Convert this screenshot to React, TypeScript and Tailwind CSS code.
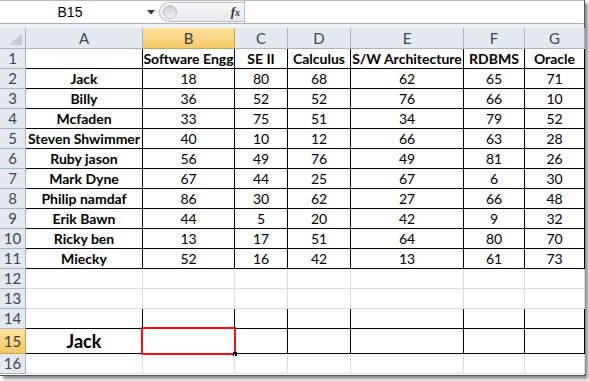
import React from "react";

/* ---------------- DATA ---------------- */
const COLS = ["A", "B", "C", "D", "E", "F", "G"];
const HEADERS = ["", "Software Engg", "SE II", "Calculus", "S/W Architecture", "RDBMS", "Oracle"];

const ROWS: (string | number)[][] = [
  ["Jack", 18, 80, 68, 62, 65, 71],
  ["Billy", 36, 52, 52, 76, 66, 10],
  ["Mcfaden", 33, 75, 51, 34, 79, 52],
  ["Steven Shwimmer", 40, 10, 12, 66, 63, 28],
  ["Ruby jason", 56, 49, 76, 49, 81, 26],
  ["Mark Dyne", 67, 44, 25, 67, 6, 30],
  ["Philip namdaf", 86, 30, 62, 27, 66, 48],
  ["Erik Bawn", 44, 5, 20, 42, 9, 32],
  ["Ricky ben", 13, 17, 51, 64, 80, 70],
  ["Miecky", 52, 16, 42, 13, 61, 73],
];

const GRID = "grid grid-cols-[26px_117px_92px_53px_63px_113px_61px_60px]";

/* ---------------- PIECES ---------------- */
const RowHeader = ({ n, active, tall }: { n: number; active?: boolean; tall?: boolean }) => (
  <div
    className={`flex items-center justify-center border-r border-b text-[15px] ${tall ? "h-[25px]" : "h-[20px]"} ${
      active
        ? "bg-gradient-to-b from-[#fbe29f] to-[#f3c865] border-[#c9a352] text-[#3b3b3b]"
        : "bg-[#e4e9ef] border-[#a9b4c2] text-[#3c4656]"
    }`}
  >
    {n}
  </div>
);

const Cell = ({
  children,
  dark,
  bold,
  tall,
  big,
  selected,
}: {
  children?: React.ReactNode;
  dark?: boolean;
  bold?: boolean;
  tall?: boolean;
  big?: boolean;
  selected?: boolean;
}) => (
  <div
    className={`relative flex items-center justify-center whitespace-nowrap overflow-visible border-r border-b text-black ${
      dark ? "border-black" : "border-[#d9dde2]"
    } ${tall ? "h-[25px]" : "h-[20px]"} ${bold ? "font-bold" : ""} ${big ? "text-[18px]" : "text-[14px]"}`}
  >
    {children}
    {selected && (
      <div className="absolute -left-[2px] -top-[2px] -right-[2px] -bottom-[2px] border-2 border-[#ff0a0a]">
        <div className="absolute -right-[3px] -bottom-[3px] w-[4px] h-[4px] bg-black" />
      </div>
    )}
  </div>
);

/* ---------------- COMPONENT ---------------- */
export default function App() {
  return (
    <div className="w-[589px] h-[381px] bg-white overflow-hidden font-['Lato',sans-serif]">
      <div className="w-[585px] h-[376px] bg-white border-r border-b border-[#555] shadow-[3px_3px_3px_rgba(0,0,0,0.45)]">
        {/* Formula bar */}
        <div className="h-[28px] border-t border-[#b7bcc3] bg-[#eef1f5]">
          <div className="flex h-[23px] bg-white border-b border-[#a9afb8]">
            <div className="w-[159px] flex items-center relative">
              <span className="w-[140px] text-center text-[14px] text-black font-['Liberation_Sans',sans-serif]">B15</span>
              <svg className="absolute left-[147px] top-[9px]" width="8" height="5" viewBox="0 0 8 5">
                <path d="M0 0 H8 L4 4.5 Z" fill="#333" />
              </svg>
            </div>
            {/* splitter pill */}
            <div className="w-[85px] my-[1px] flex items-center justify-between rounded-l-full border border-r-0 border-[#b9c0c8] bg-gradient-to-b from-[#f7f8fa] to-[#e6e9ee]">
              <div className="ml-[3px] w-[14px] h-[14px] rounded-full bg-gradient-to-b from-[#c9ced5] to-[#eef0f3] border border-[#b5bcc5]" />
              <span className="mr-[4px] text-[13px] italic font-bold text-[#333] font-['Liberation_Serif',serif]">
                f<span className="text-[10px]">x</span>
              </span>
            </div>
            <div className="flex-1 border-l border-[#b9c0c8]" />
          </div>
        </div>

        {/* Column headers */}
        <div className={GRID}>
          <div className="relative h-[21px] bg-[#e4e9ef] border-r border-b border-[#a9b4c2]">
            <svg className="absolute right-[3px] bottom-[3px]" width="13" height="12" viewBox="0 0 13 12">
              <path d="M13 0 V12 H0 Z" fill="#c5ccd5" />
            </svg>
          </div>
          {COLS.map((c) => (
            <div
              key={c}
              className={`h-[21px] flex items-center justify-center border-r border-b text-[15px] ${
                c === "B"
                  ? "bg-gradient-to-b from-[#fbe29f] to-[#f3c865] border-[#c9a352] text-[#3b3b3b]"
                  : "bg-[#e4e9ef] border-[#a9b4c2] text-[#3c4656]"
              }`}
            >
              {c}
            </div>
          ))}
        </div>

        {/* Row 1: headers */}
        <div className={GRID}>
          <RowHeader n={1} />
          {HEADERS.map((h, i) => (
            <Cell key={i} dark bold>
              {h}
            </Cell>
          ))}
        </div>

        {/* Rows 2-11: data */}
        {ROWS.map((r, ri) => (
          <div key={ri} className={GRID}>
            <RowHeader n={ri + 2} />
            {r.map((v, ci) => (
              <Cell key={ci} dark bold={ci === 0}>
                {v}
              </Cell>
            ))}
          </div>
        ))}

        {/* Rows 12-14: empty */}
        {[12, 13, 14].map((n) => (
          <div key={n} className={GRID}>
            <RowHeader n={n} />
            {COLS.map((c) => (
              <Cell key={c} dark={n === 14} />
            ))}
          </div>
        ))}

        {/* Row 15: lookup */}
        <div className={GRID}>
          <RowHeader n={15} active tall />
          <Cell dark bold big tall>
            Jack
          </Cell>
          <Cell dark tall selected />
          {COLS.slice(2).map((c) => (
            <Cell key={c} dark tall />
          ))}
        </div>

        {/* Row 16 */}
        <div className={GRID}>
          <RowHeader n={16} />
          {COLS.map((c) => (
            <Cell key={c} />
          ))}
        </div>
      </div>
    </div>
  );
}
